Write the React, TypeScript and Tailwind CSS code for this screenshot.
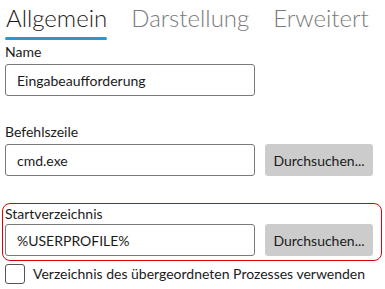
import React from "react";

const font = { fontFamily: 'Lato, "Noto Sans", sans-serif' };

const Field = ({ value, browse }: { value: string; browse?: boolean }) => {
  return (
    <div className="flex items-center gap-[10px]">
      <div className="w-[250px] h-[32px] border border-[#7a7a7a] rounded-[3px] flex items-center pl-[11px] text-[14px] text-[#1b1b1b]">
        {value}
      </div>
      {browse && (
        <button className="w-[108px] h-[32px] bg-[#cccccc] rounded-[3px] text-[14px] text-[#1b1b1b]">
          Durchsuchen...
        </button>
      )}
    </div>
  );
};

export default function App() {
  return (
    <div className="w-[385px] h-[289px] bg-white overflow-hidden" style={font}>
      {/* tabs */}
      <div className="flex gap-[24px] pl-[5px] h-[40px]">
        <div className="flex flex-col">
          <span className="text-[24px] font-light text-[#1b1b1b] leading-[36px] whitespace-nowrap pl-[1px]">Allgemein</span>
          <div className="h-[3px] mt-[1px] bg-[#2f94d0] rounded-full"></div>
        </div>
        <span className="text-[24px] font-light text-[#7a7a7a] leading-[36px] whitespace-nowrap">Darstellung</span>
        <span className="text-[24px] font-light text-[#7a7a7a] leading-[36px] whitespace-nowrap">Erweitert</span>
      </div>

      <div className="pl-[5px] flex flex-col">
        <div className="text-[14px] text-[#1b1b1b] h-[24px] leading-[24px]">Name</div>
        <Field value="Eingabeaufforderung" />

        <div className="text-[14px] text-[#1b1b1b] mt-[24px] h-[24px] leading-[24px]">Befehlszeile</div>
        <Field value="cmd.exe" browse />
      </div>

      <div className="ml-[2px] mt-[27px] w-[380px] h-[58px] border border-[#e00000] rounded-[8px] pl-[2px]">
        <div className="text-[14px] text-[#1b1b1b] h-[20px] leading-[20px]">Startverzeichnis</div>
        <Field value="%USERPROFILE%" browse />
      </div>

      <div className="flex items-center gap-[8px] pl-[5px] mt-[2px]">
        <div className="w-[20px] h-[20px] border border-[#555] rounded-[3px] bg-white shrink-0"></div>
        <span className="text-[14px] text-[#1b1b1b] whitespace-nowrap">Verzeichnis des übergeordneten Prozesses verwenden</span>
      </div>
    </div>
  );
}
